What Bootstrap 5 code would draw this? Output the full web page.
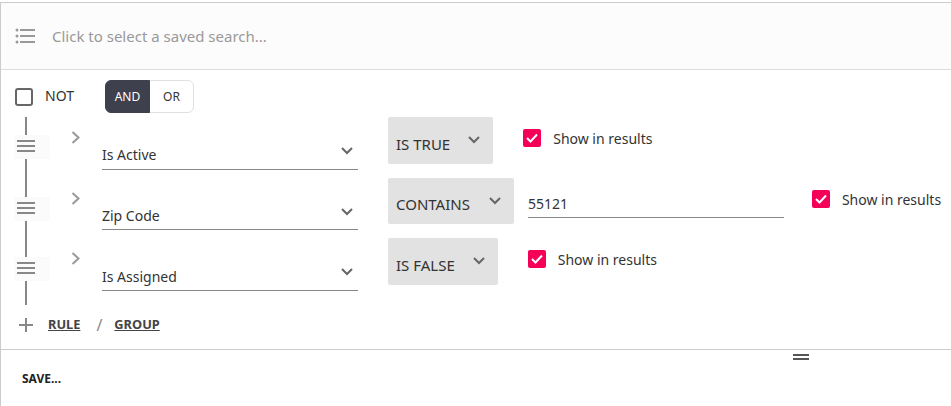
<!DOCTYPE html>
<html lang="en">
<head>
  <meta charset="UTF-8">
  <meta name="viewport" content="width=device-width, initial-scale=1">
  <title>Query builder</title>
  <link href="https://cdn.jsdelivr.net/npm/bootstrap@5.3.0/dist/css/bootstrap.min.css" rel="stylesheet">
  <style>
    body {
      font-family: "Noto Sans", "Open Sans", sans-serif;
      font-size: 14px;
      color: #333;
      background: #fff;
      padding-top: 2px;
      overflow: hidden;
    }
    .qb-shell {
      position: relative;
      border-top: 1px solid #ccc;
      border-left: 1px solid #ccc;
      height: 404px;
    }
    .saved-bar {
      height: 67px;
      background: #fcfcfc;
      border-bottom: 1px solid #ddd;
      padding-left: 14px;
      color: #999;
      font-size: 15px;
    }
    .saved-bar svg { margin-right: 17px; }
    .query-body { height: 280px; border-bottom: 1px solid #ccc; padding-top: 10px; }
    .not-row { height: 33px; padding-left: 14px; margin-bottom: 4px; }
    .not-label { padding-bottom: 2px; }
    .plain-check {
      width: 18px;
      height: 18px;
      border: 2px solid #666;
      border-radius: 3px;
      margin-right: 12px;
    }
    .logic-group { margin-left: 31px; height: 33px; }
    .logic-group .btn {
      font-size: 12px;
      width: 45px;
      padding: 0;
      line-height: 31px;
      color: #333;
      background: #fff;
      border-color: #e0e0e0;
    }
    .logic-group .btn.active {
      background: #3f404d;
      border-color: #3f404d;
      color: #fff;
    }
    .rule-row { height: 61px; }
    .rule-row.mid-rule { height: 60px; }
    .rule-row.last-rule { height: 67px; }
    .grip-col { width: 50px; flex: none; padding-left: 13px; }
    .grip-line { width: 2px; flex: 1; background: #888; margin-left: 11px; }
    .grip-line.grip-top { flex: none; height: 19px; }
    .first-rule .grip-line.grip-top { height: 18px; }
    .grip-handle {
      width: 36px;
      height: 24px;
      background: #fbfbfb;
      padding: 5px 0 0 3px;
    }
    .grip-handle span { display: block; width: 18px; height: 2px; background: #888; margin-bottom: 3px; }
    .expand-col { width: 51px; flex: none; padding: 8px 0 0 20px; }
    .field-select {
      width: 256px;
      height: 53px;
      flex: none;
      margin-right: 30px;
      border-bottom: 1px solid #888;
      padding-top: 27px;
      position: relative;
    }
    .mid-rule .field-select { height: 52px; }
    .last-rule .field-select { padding-top: 28px; }
    .field-select svg { position: absolute; right: 5px; top: 30px; }
    .op-select {
      height: 47px;
      background: #e2e2e2;
      border-radius: 2px;
      padding: 18px 13px 0 8px;
      flex: none;
      font-size: 15px;
    }
    .mid-rule .op-select { height: 46px; padding-top: 17px; }
    .op-select span { display: block; line-height: 19px; }
    .op-select svg { margin: 1px 0 0 18px; }
    .mid-rule .op-select svg { margin: 2px 0 0 19px; }
    .value-input {
      width: 256px;
      height: 40px;
      border: 0;
      border-bottom: 1px solid #888;
      border-radius: 0;
      margin-left: 14px;
      padding: 11px 0 0;
      font-size: 14px;
      color: #333;
      background: transparent;
      flex: none;
    }
    .show-check { margin: 12px 0 0 30px; height: 18px; }
    .show-check.wide { margin-left: 28px; }
    .show-box {
      width: 18px;
      height: 18px;
      flex: none;
      background: #f50057;
      border-radius: 2px;
      margin-right: 12px;
    }
    .add-row { height: 36px; padding-left: 18px; margin-top: 2px; }
    .add-row a, .save-link {
      font-size: 12px;
      font-weight: 700;
      color: #444;
    }
    .add-row a { font-size: 12.8px; }
    .add-row svg { margin-right: 15px; }
    .add-sep { margin: 0 12px 0 16px; color: #888; font-size: 16px; }
    .save-link { color: #222; text-decoration: none; padding: 2px 0 0 21px; }
    .footer-bar { height: 56px; }
    .resize-mark {
      position: absolute;
      left: 792px;
      top: 351px;
      width: 16px;
      height: 6px;
      border-top: 2px solid #555;
      border-bottom: 2px solid #555;
    }
  </style>
</head>
<body>

<div class="qb-shell">
  <div class="saved-bar d-flex align-items-center">
    <svg width="20" height="16" viewBox="0 0 20 16" fill="#999">
      <circle cx="2" cy="2" r="1.5"/><circle cx="2" cy="8" r="1.5"/><circle cx="2" cy="14" r="1.5"/>
      <rect x="5" y="1" width="15" height="2"/><rect x="5" y="7" width="15" height="2"/><rect x="5" y="13" width="15" height="2"/>
    </svg>
    <span>Click to select a saved search...</span>
  </div>

  <div class="query-body">
    <div class="not-row d-flex align-items-center">
      <span class="plain-check"></span>
      <span class="not-label">NOT</span>
      <div class="btn-group logic-group" role="group">
        <button type="button" class="btn active">AND</button>
        <button type="button" class="btn">OR</button>
      </div>
    </div>

    <div class="rule-row first-rule d-flex">
      <div class="grip-col d-flex flex-column">
        <div class="grip-line grip-top"></div>
        <div class="grip-handle"><span></span><span></span><span></span></div>
        <div class="grip-line"></div>
      </div>
      <div class="expand-col">
        <svg width="10" height="13" viewBox="0 0 10 13" fill="none" stroke="#999" stroke-width="2"><path d="M1.500 1l6 5.500-6 5.500"/></svg>
      </div>
      <div class="field-select">Is Active
        <svg width="12" height="8" viewBox="0 0 12 8" fill="none" stroke="#666" stroke-width="2"><path d="M1 1l5 5 5-5"/></svg>
      </div>
      <div class="op-select d-flex">
        <span>IS TRUE</span>
        <svg width="12" height="8" viewBox="0 0 12 8" fill="none" stroke="#666" stroke-width="2"><path d="M1 1l5 5 5-5"/></svg>
      </div>
      <div class="show-check d-flex align-items-center">
        <span class="show-box d-flex align-items-center justify-content-center">
          <svg width="12" height="10" viewBox="0 0 12 10" fill="none" stroke="#fff" stroke-width="2"><path d="M1 5l3.500 3.500L11 1.500"/></svg>
        </span>
        <span>Show in results</span>
      </div>
    </div>

    <div class="rule-row mid-rule d-flex">
      <div class="grip-col d-flex flex-column">
        <div class="grip-line grip-top"></div>
        <div class="grip-handle"><span></span><span></span><span></span></div>
        <div class="grip-line"></div>
      </div>
      <div class="expand-col">
        <svg width="10" height="13" viewBox="0 0 10 13" fill="none" stroke="#999" stroke-width="2"><path d="M1.500 1l6 5.500-6 5.500"/></svg>
      </div>
      <div class="field-select">Zip Code
        <svg width="12" height="8" viewBox="0 0 12 8" fill="none" stroke="#666" stroke-width="2"><path d="M1 1l5 5 5-5"/></svg>
      </div>
      <div class="op-select d-flex">
        <span>CONTAINS</span>
        <svg width="12" height="8" viewBox="0 0 12 8" fill="none" stroke="#666" stroke-width="2"><path d="M1 1l5 5 5-5"/></svg>
      </div>
      <input class="value-input" type="text" value="55121">
      <div class="show-check wide d-flex align-items-center">
        <span class="show-box d-flex align-items-center justify-content-center">
          <svg width="12" height="10" viewBox="0 0 12 10" fill="none" stroke="#fff" stroke-width="2"><path d="M1 5l3.500 3.500L11 1.500"/></svg>
        </span>
        <span>Show in results</span>
      </div>
    </div>

    <div class="rule-row last-rule d-flex">
      <div class="grip-col d-flex flex-column">
        <div class="grip-line grip-top"></div>
        <div class="grip-handle"><span></span><span></span><span></span></div>
        <div class="grip-line"></div>
      </div>
      <div class="expand-col">
        <svg width="10" height="13" viewBox="0 0 10 13" fill="none" stroke="#999" stroke-width="2"><path d="M1.500 1l6 5.500-6 5.500"/></svg>
      </div>
      <div class="field-select">Is Assigned
        <svg width="12" height="8" viewBox="0 0 12 8" fill="none" stroke="#666" stroke-width="2"><path d="M1 1l5 5 5-5"/></svg>
      </div>
      <div class="op-select d-flex">
        <span>IS FALSE</span>
        <svg width="12" height="8" viewBox="0 0 12 8" fill="none" stroke="#666" stroke-width="2"><path d="M1 1l5 5 5-5"/></svg>
      </div>
      <div class="show-check d-flex align-items-center">
        <span class="show-box d-flex align-items-center justify-content-center">
          <svg width="12" height="10" viewBox="0 0 12 10" fill="none" stroke="#fff" stroke-width="2"><path d="M1 5l3.500 3.500L11 1.500"/></svg>
        </span>
        <span>Show in results</span>
      </div>
    </div>

    <div class="add-row d-flex align-items-center">
      <svg width="14" height="14" viewBox="0 0 14 14" stroke="#888" stroke-width="2"><path d="M7 0v14M0 7h14"/></svg>
      <a href="#">RULE</a>
      <span class="add-sep">/</span>
      <a href="#">GROUP</a>
    </div>
  </div>

  <div class="footer-bar d-flex align-items-center">
    <a class="save-link" href="#">SAVE...</a>
  </div>
  <div class="resize-mark"></div>
</div>

</body>
</html>
